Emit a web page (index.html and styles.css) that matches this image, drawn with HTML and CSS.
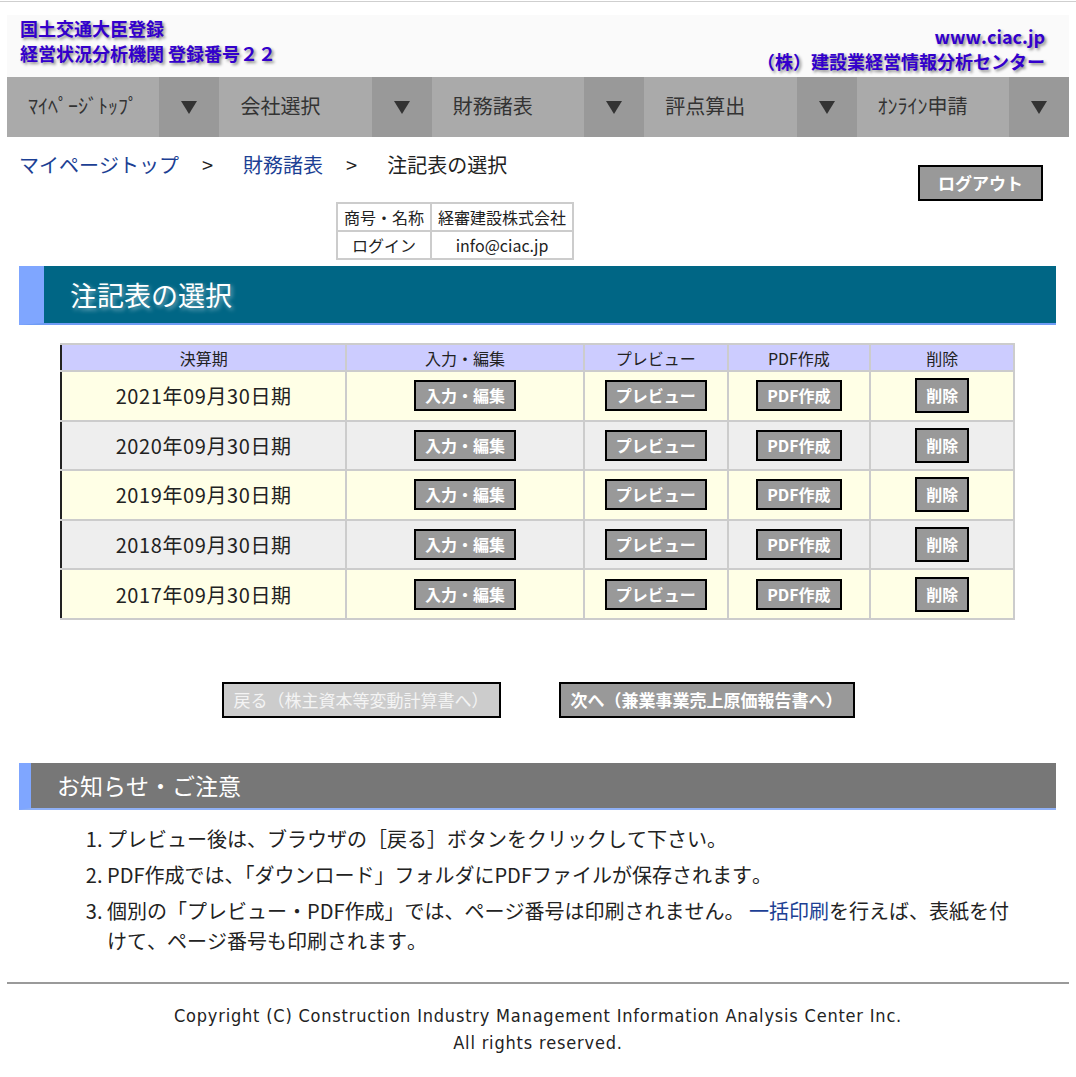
FILE: index.html
```html
<!DOCTYPE html>
<html lang="ja">
<head>
<meta charset="utf-8">
<title>注記表の選択</title>
<link rel="stylesheet" href="styles.css">
</head>
<body>
<div class="topline"></div>
<div class="page">
  <header class="site-header">
    <div class="hdr-left">
      <div>国土交通大臣登録</div>
      <div>経営状況分析機関 登録番号２２</div>
    </div>
    <div class="hdr-right">
      <div>www.ciac.jp</div>
      <div>（株）建設業経営情報分析センター</div>
    </div>
  </header>
  <nav class="gnav">
    <div class="gnav-item"><span class="gnav-label">ﾏｲﾍﾟｰｼﾞﾄｯﾌﾟ</span><span class="gnav-arrow"><svg width="16" height="13" viewBox="0 0 16 13"><polygon points="0,0 16,0 8,13" fill="#333"/></svg></span></div>
    <div class="gnav-item"><span class="gnav-label">会社選択</span><span class="gnav-arrow"><svg width="16" height="13" viewBox="0 0 16 13"><polygon points="0,0 16,0 8,13" fill="#333"/></svg></span></div>
    <div class="gnav-item"><span class="gnav-label">財務諸表</span><span class="gnav-arrow"><svg width="16" height="13" viewBox="0 0 16 13"><polygon points="0,0 16,0 8,13" fill="#333"/></svg></span></div>
    <div class="gnav-item"><span class="gnav-label">評点算出</span><span class="gnav-arrow"><svg width="16" height="13" viewBox="0 0 16 13"><polygon points="0,0 16,0 8,13" fill="#333"/></svg></span></div>
    <div class="gnav-item"><span class="gnav-label">ｵﾝﾗｲﾝ申請</span><span class="gnav-arrow"><svg width="16" height="13" viewBox="0 0 16 13"><polygon points="0,0 16,0 8,13" fill="#333"/></svg></span></div>
  </nav>

  <main class="content">
    <div class="top-row">
      <div class="breadcrumb">
        <a class="crumb-link">マイページトップ</a><span class="sep">&gt;</span><a class="crumb-link">財務諸表</a><span class="sep">&gt;</span><span class="crumb-current">注記表の選択</span>
      </div>
      <div class="logout">ログアウト</div>
    </div>

    <table class="account">
      <tr><td>商号・名称</td><td>経審建設株式会社</td></tr>
      <tr><td>ログイン</td><td>info@ciac.jp</td></tr>
    </table>

    <h1 class="page-title">注記表の選択</h1>

    <table class="periods">
      <colgroup>
        <col class="c1"><col class="c2"><col class="c3"><col class="c4"><col class="c5">
      </colgroup>
      <thead>
        <tr><th>決算期</th><th>入力・編集</th><th>プレビュー</th><th>PDF作成</th><th>削除</th></tr>
      </thead>
      <tbody>
        <tr class="odd"><td class="period">2021年09月30日期</td><td><span class="btn">入力・編集</span></td><td><span class="btn">プレビュー</span></td><td><span class="btn">PDF作成</span></td><td><span class="btn btn-del">削除</span></td></tr>
        <tr class="even"><td class="period">2020年09月30日期</td><td><span class="btn">入力・編集</span></td><td><span class="btn">プレビュー</span></td><td><span class="btn">PDF作成</span></td><td><span class="btn btn-del">削除</span></td></tr>
        <tr class="odd"><td class="period">2019年09月30日期</td><td><span class="btn">入力・編集</span></td><td><span class="btn">プレビュー</span></td><td><span class="btn">PDF作成</span></td><td><span class="btn btn-del">削除</span></td></tr>
        <tr class="even"><td class="period">2018年09月30日期</td><td><span class="btn">入力・編集</span></td><td><span class="btn">プレビュー</span></td><td><span class="btn">PDF作成</span></td><td><span class="btn btn-del">削除</span></td></tr>
        <tr class="odd"><td class="period">2017年09月30日期</td><td><span class="btn">入力・編集</span></td><td><span class="btn">プレビュー</span></td><td><span class="btn">PDF作成</span></td><td><span class="btn btn-del">削除</span></td></tr>
      </tbody>
    </table>

    <div class="pager">
      <span class="pager-btn pager-prev">戻る（株主資本等変動計算書へ）</span>
      <span class="pager-btn pager-next">次へ（兼業事業売上原価報告書へ）</span>
    </div>

    <h2 class="notice-title">お知らせ・ご注意</h2>
    <ol class="notes">
      <li>プレビュー後は、ブラウザの［戻る］ボタンをクリックして下さい。</li>
      <li>PDF作成では、「ダウンロード」フォルダにPDFファイルが保存されます。</li>
      <li>個別の「プレビュー・PDF作成」では、ページ番号は印刷されません。 <a class="note-link">一括印刷</a>を行えば、表紙を付けて、ページ番号も印刷されます。</li>
    </ol>
  </main>

  <footer class="site-footer">
    <p>Copyright (C) Construction Industry Management Information Analysis Center Inc.<br>All rights reserved.</p>
  </footer>
</div>
</body>
</html>
```

FILE: styles.css
```css
* { box-sizing: border-box; }

body {
  margin: 0;
  background: #fff;
  color: #222;
  font-family: "Noto Sans CJK JP", "Noto Sans", sans-serif;
  font-kerning: none;
}

.topline {
  height: 1px;
  margin-top: 1px;
  background: #cfcfcf;
}

.page {
  margin: 0 7px;
}

/* header */
.site-header {
  margin-top: 13px;
  height: 62px;
  background: #fafafa;
  display: flex;
  justify-content: space-between;
  padding: 0 24px 0 13px;
  color: #3300cc;
  font-weight: bold;
  text-shadow: 2px 2px 3px #8a8a8a;
}

.hdr-left {
  font-size: 18px;
  line-height: 25px;
  padding-top: 1px;
}

.hdr-right {
  font-size: 18px;
  line-height: 25px;
  padding-top: 9px;
  text-align: right;
}

/* global nav */
.gnav {
  display: grid;
  grid-template-columns: repeat(5, 1fr);
  height: 60px;
}

.gnav-item {
  display: grid;
  grid-template-columns: 1fr 60px;
}

.gnav-label {
  background: #aaaaaa;
  color: #333;
  font-size: 20px;
  line-height: 58px;
  padding-left: 21px;
  white-space: nowrap;
}

.gnav-arrow {
  background: #999999;
  display: flex;
  align-items: center;
  justify-content: center;
}

/* content */
.content {
  padding: 0 13px 0 12px;
}

.top-row {
  display: flex;
  justify-content: space-between;
  align-items: flex-start;
}

.breadcrumb {
  padding-top: 14px;
  font-size: 20px;
  line-height: 28px;
}

.crumb-link {
  color: #1c3f94;
}

.crumb-current {
  color: #222;
}

.sep {
  display: inline-block;
  margin: 0 30px 0 23px;
  color: #222;
}

.logout {
  margin: 28px 13px 0 0;
  background: #999;
  border: 2px solid #000;
  color: #fff;
  font-weight: bold;
  font-size: 17px;
  line-height: 32px;
  padding: 0 18px;
}

.account {
  margin: 1px 0 0 317px;
  border-collapse: collapse;
  font-size: 16px;
}

.account td {
  border: 2px solid #cccccc;
  height: 28px;
  padding: 0 6px;
  text-align: center;
  line-height: 20px;
}

.page-title {
  margin: 6px 0 0;
  height: 59px;
  background: #006685;
  border-left: 25px solid #7fa6ff;
  border-bottom: 2px solid #6f9cf5;
  color: #fff;
  font-size: 27px;
  font-weight: normal;
  line-height: 57px;
  padding-left: 26px;
  text-shadow: 2px 2px 4px rgba(220, 235, 240, 0.55);
}

/* periods table */
.periods {
  margin: 18px auto 0;
  width: 955px;
  border-collapse: collapse;
  border-left: 2px solid #222;
}

.periods .c1 { width: 286px; }
.periods .c2 { width: 238px; }
.periods .c3 { width: 144px; }
.periods .c4 { width: 143px; }
.periods .c5 { width: 144px; }

.periods th {
  background: #ccccff;
  border: 2px solid #cccccc;
  font-weight: normal;
  font-size: 16px;
  height: 27px;
  padding: 0;
  line-height: 22px;
}

.periods td {
  border: 2px solid #cccccc;
  height: 49.6px;
  padding: 0;
  text-align: center;
}

.periods th:first-child,
.periods td:first-child {
  border-left-color: #222;
}

.periods .odd { background: #ffffe6; }
.periods .even { background: #eeeeee; }

.period {
  font-size: 20px;
  letter-spacing: 0.6px;
  color: #222;
}

.btn {
  display: inline-block;
  background: #999999;
  border: 2px solid #000;
  color: #fff;
  font-weight: bold;
  font-size: 16px;
  line-height: 23px;
  padding: 2px 9px;
  vertical-align: middle;
  letter-spacing: 0;
}

.btn-del {
  padding: 4px 9px;
}

/* pager */
.pager {
  margin-top: 62px;
  display: flex;
  justify-content: center;
  gap: 58px;
  padding-left: 1px;
}

.pager-btn {
  border: 2px solid #000;
  font-size: 17px;
  line-height: 32px;
  padding: 0 10px;
  color: #fff;
}

.pager-prev {
  background: #cccccc;
  color: #f4f4f4;
}

.pager-next {
  background: #999999;
  font-weight: bold;
}

/* notices */
.notice-title {
  margin: 45px 0 0;
  height: 47px;
  background: #777777;
  border-left: 12px solid #7fa6ff;
  border-bottom: 2px solid #8fb0f5;
  color: #fff;
  font-size: 23px;
  font-weight: normal;
  line-height: 44px;
  padding-left: 26px;
}

.notes {
  margin: 14px 0 0;
  padding: 0 40px 0 88px;
  font-size: 20px;
  line-height: 30px;
  color: #222;
}

.notes li {
  margin-bottom: 6px;
}

.notes li:last-child {
  margin-bottom: 0;
}

.note-link {
  color: #1c3f94;
}

/* footer */
.site-footer {
  margin-top: 26px;
  border-top: 2px solid #9a9a9a;
}

.site-footer p {
  margin: 18px 0 0;
  text-align: center;
  font-family: "DejaVu Sans Condensed", "DejaVu Sans", sans-serif;
  font-size: 18px;
  letter-spacing: 0.8px;
  line-height: 27px;
  color: #222;
}
```
